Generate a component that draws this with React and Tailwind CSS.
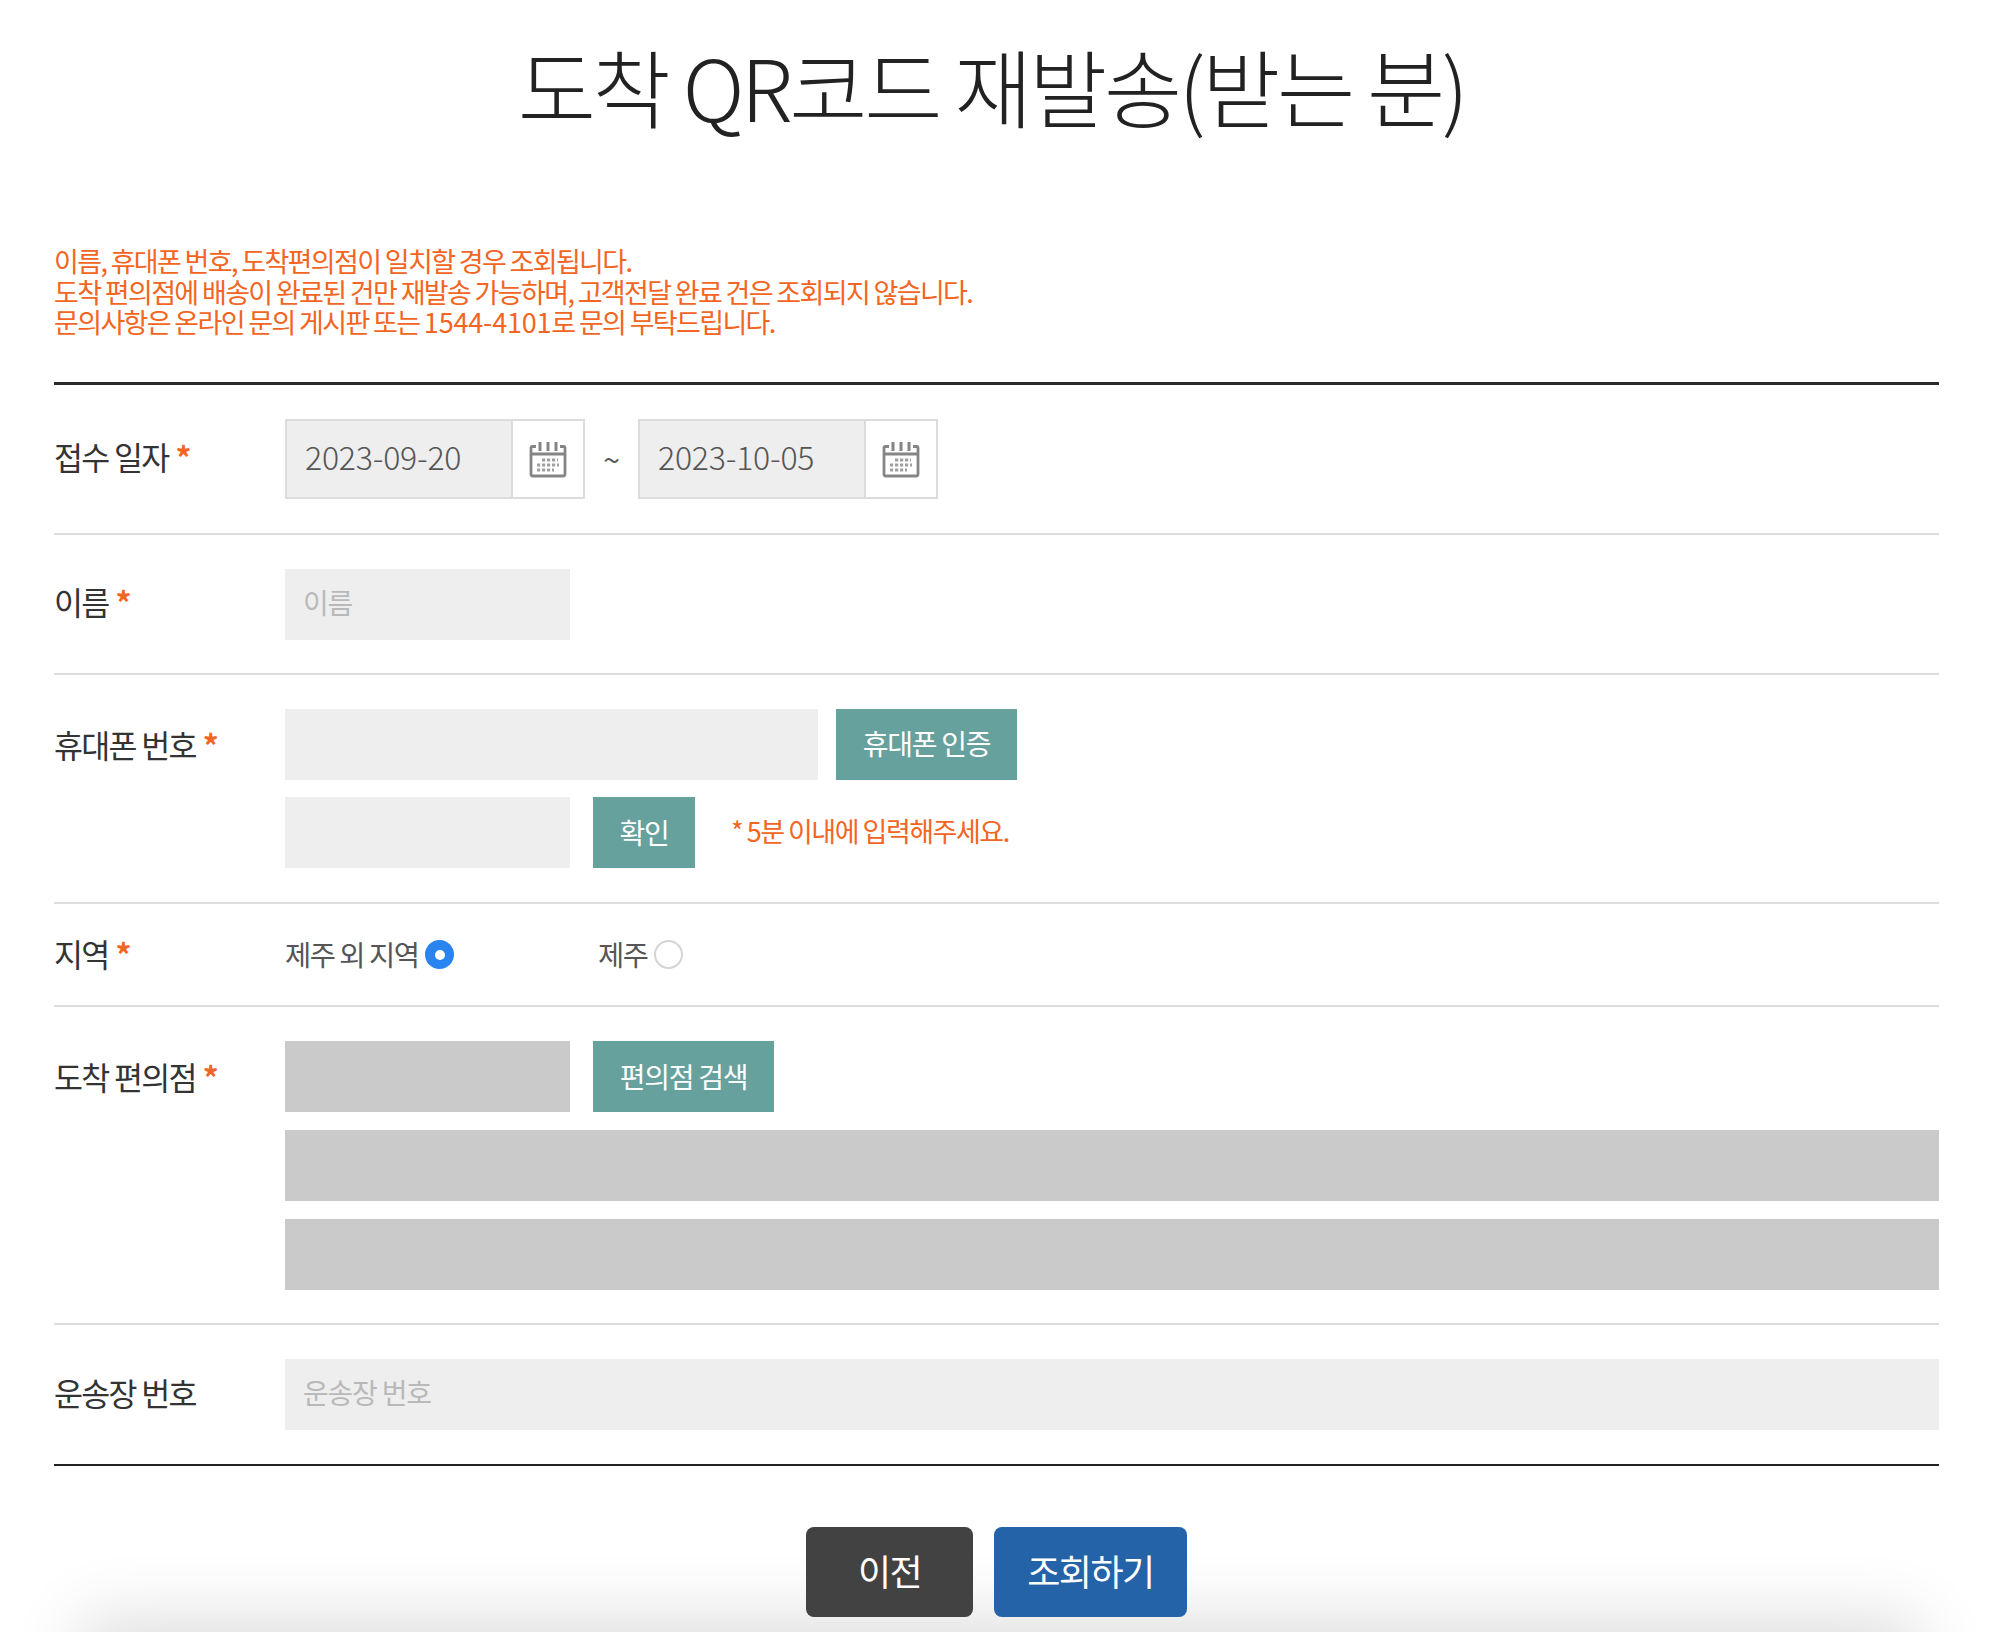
function Label({ children, required = true, className = "h-[71px]" }) {
  return (
    <div className={"w-[231px] shrink-0 flex items-center text-[31.500px] tracking-[-1.7px] text-[#333333] " + className}>
      <span>{children}</span>
      {required && <span className="ml-[7px] text-[#f26522] font-bold">*</span>}
    </div>
  )
}

function CalendarIcon() {
  return (
    <svg width="38" height="38" viewBox="0 0 38 38" fill="none" stroke="#858585" strokeWidth="2.8">
      <path d="M7 6.500H3.500A1.500 1.500 0 0 0 2 8V34a2 2 0 0 0 2 2h30a2 2 0 0 0 2-2V8a1.500 1.500 0 0 0-1.500-1.500H31" />
      <path d="M2 14h34" strokeWidth="3" />
      <path d="M11 2v9M19 2v9M27 2v9" strokeWidth="3" />
      <path d="M13 20h16M8 25h22M8 30h17" strokeWidth="3.200" strokeDasharray="3.200 1.800" stroke="#a0a0a0" />
    </svg>
  )
}

function DateInput({ value }) {
  return (
    <div className="w-[300px] h-[80px] flex border-2 border-[#dcdcdc]">
      <div className="w-[226px] bg-[#eeeeee] flex items-center pl-[18px] pb-[6px] text-[32px] tracking-[-0.2px] text-[#555555] font-light border-r-2 border-[#dcdcdc]">
        {value}
      </div>
      <div className="flex-1 flex items-center justify-center">
        <CalendarIcon />
      </div>
    </div>
  )
}

function Field({ className, placeholder }) {
  return (
    <div className={"h-[71px] flex items-center pl-[18px] pb-[5px] text-[28px] tracking-[-1.2px] text-[#b9b9b9] " + className}>
      {placeholder}
    </div>
  )
}

function TealButton({ className, children }) {
  return (
    <button className={"h-[71px] pb-[2px] bg-[#67a19d] text-white text-[28px] tracking-[-1.3px] flex items-center justify-center " + className}>
      {children}
    </button>
  )
}

function Radio({ checked }) {
  return checked ? (
    <span className="w-[29px] h-[29px] rounded-full bg-[#2a84f0] flex items-center justify-center">
      <span className="w-[10px] h-[10px] rounded-full bg-white" />
    </span>
  ) : (
    <span className="w-[29px] h-[29px] rounded-full border-2 border-[#d4d4d4] bg-white" />
  )
}

export default function App() {
  return (
    <div
      className="relative w-full h-[1632px] overflow-hidden bg-white pl-[54px] pr-[61px]"
      style={{ fontFamily: '"Noto Sans CJK KR", "Noto Sans", sans-serif' }}
    >
      <h1 className="pt-[22px] pr-[10px] text-center text-[85px] leading-[126px] tracking-[-3.4px] font-light text-[#222222]">
        도착 QR코드 재발송(받는 분)
      </h1>

      <div className="mt-[98px] text-[27px] leading-[30.6px] tracking-[-1.65px] text-[#f26522]">
        <p>이름, 휴대폰 번호, 도착편의점이 일치할 경우 조회됩니다.</p>
        <p>도착 편의점에 배송이 완료된 건만 재발송 가능하며, 고객전달 완료 건은 조회되지 않습니다.</p>
        <p>문의사항은 온라인 문의 게시판 또는 <span className="tracking-[-0.2px]">1544-4101</span>로 문의 부탁드립니다.</p>
      </div>

      <div className="mt-[44px] border-t-[3px] border-[#2b2b2b]">
        <div className="flex py-[34px] border-b-2 border-[#dddddd]">
          <Label className="h-[80px] pb-[4px]">접수 일자</Label>
          <div className="flex items-center">
            <DateInput value="2023-09-20" />
            <span className="w-[53px] text-center text-[30px] text-[#555555]">~</span>
            <DateInput value="2023-10-05" />
          </div>
        </div>

        <div className="flex pt-[34px] pb-[33px] border-b-2 border-[#dddddd]">
          <Label className="h-[71px] pb-[6px]">이름</Label>
          <Field className="w-[285px] bg-[#eeeeee]" placeholder="이름" />
        </div>

        <div className="flex py-[34px] border-b-2 border-[#dddddd]">
          <Label>휴대폰 번호</Label>
          <div className="flex flex-col gap-[17.500px]">
            <div className="flex gap-[18px]">
              <Field className="w-[533px] bg-[#eeeeee]" />
              <TealButton className="w-[181px]">휴대폰 인증</TealButton>
            </div>
            <div className="flex items-center">
              <Field className="w-[285px] bg-[#eeeeee]" />
              <TealButton className="w-[102px] ml-[23px]">확인</TealButton>
              <span className="ml-[36px] pb-[3px] text-[27px] tracking-[-1.5px] text-[#f26522]">* 5분 이내에 입력해주세요.</span>
            </div>
          </div>
        </div>

        <div className="flex h-[103px] items-center border-b-2 border-[#dddddd]">
          <Label className="pb-[3px]">지역</Label>
          <div className="flex items-center text-[28.500px] tracking-[-1.5px] text-[#555555]">
            <span className="w-[313px] flex items-center gap-[7px]">
              제주 외 지역
              <Radio checked />
            </span>
            <span className="flex items-center gap-[7px]">
              제주
              <Radio />
            </span>
          </div>
        </div>

        <div className="flex pt-[34px] pb-[33px] border-b-2 border-[#dddddd]">
          <Label>도착 편의점</Label>
          <div className="flex-1 flex flex-col gap-[18px]">
            <div className="flex gap-[23px]">
              <Field className="w-[285px] bg-[#cacaca]" />
              <TealButton className="w-[181px]">편의점 검색</TealButton>
            </div>
            <Field className="bg-[#cacaca]" />
            <Field className="bg-[#cacaca]" />
          </div>
        </div>

        <div className="flex py-[34px] border-b-2 border-[#222222]">
          <Label required={false} className="h-[71px] pb-[5px]">운송장 번호</Label>
          <Field className="flex-1 bg-[#eeeeee]" placeholder="운송장 번호" />
        </div>
      </div>

      <div className="relative z-10 mt-[61px] flex justify-center gap-[21px]">
        <button className="w-[167px] h-[90px] pb-1 rounded-lg bg-[#424242] text-white text-[36px] tracking-[-1.5px]">이전</button>
        <button className="w-[193px] h-[90px] pb-1 rounded-lg bg-[#2563a8] text-white text-[36px] tracking-[-1.5px]">조회하기</button>
      </div>

      <div className="absolute left-[110px] right-[110px] top-[1650px] h-[60px] shadow-[0_0_70px_30px_rgba(0,0,0,0.14)]" />
    </div>
  )
}
